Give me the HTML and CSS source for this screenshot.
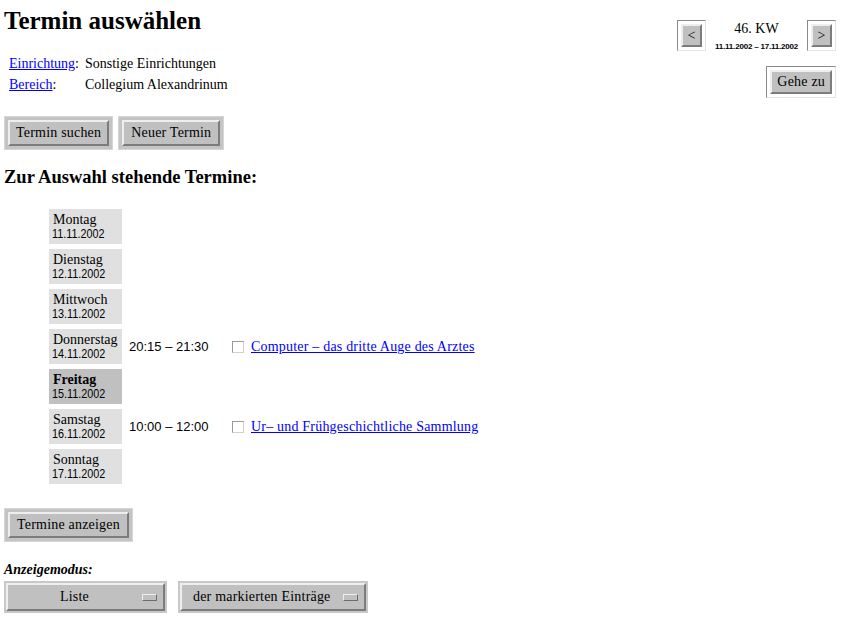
FILE: index.html
```html
<!DOCTYPE html>
<html lang="de">
<head>
    <meta charset="UTF-8">
    <title>Termin auswählen</title>
    <link rel="stylesheet" href="styles.css">
</head>
<body>

<div class="page">
    <div class="top">
        <div class="intro">
            <h1>Termin auswählen</h1>
            <div class="info">
                <span><a href="#">Einrichtung</a>:</span>
                <span>Sonstige Einrichtungen</span>
                <span><a href="#">Bereich</a>:</span>
                <span>Collegium Alexandrinum</span>
            </div>
        </div>

        <div class="week">
            <div class="week-nav">
                <span class="sunken"><button class="bevel arrow">&lt;</button></span>
                <div class="week-label">
                    <div class="kw">46. KW</div>
                    <div class="range">11.11.2002 – 17.11.2002</div>
                </div>
                <span class="sunken"><button class="bevel arrow">&gt;</button></span>
            </div>
            <span class="sunken goto"><button class="bevel">Gehe zu</button></span>
        </div>
    </div>

    <div class="actions">
        <span class="frame"><button class="bevel wide">Termin suchen</button></span>
        <span class="frame"><button class="bevel wide">Neuer Termin</button></span>
    </div>

    <h2>Zur Auswahl stehende Termine:</h2>

    <div class="schedule">
        <div class="day"><span class="name">Montag</span><span class="date">11.11.2002</span></div>
        <div></div><div></div><div></div>

        <div class="day"><span class="name">Dienstag</span><span class="date">12.11.2002</span></div>
        <div></div><div></div><div></div>

        <div class="day"><span class="name">Mittwoch</span><span class="date">13.11.2002</span></div>
        <div></div><div></div><div></div>

        <div class="day"><span class="name">Donnerstag</span><span class="date">14.11.2002</span></div>
        <div class="time">20:15 – 21:30</div>
        <div class="check"><span class="box"></span></div>
        <div class="event"><a href="#">Computer – das dritte Auge des Arztes</a></div>

        <div class="day today"><span class="name">Freitag</span><span class="date">15.11.2002</span></div>
        <div></div><div></div><div></div>

        <div class="day"><span class="name">Samstag</span><span class="date">16.11.2002</span></div>
        <div class="time">10:00 – 12:00</div>
        <div class="check"><span class="box"></span></div>
        <div class="event"><a href="#">Ur– und Frühgeschichtliche Sammlung</a></div>

        <div class="day"><span class="name">Sonntag</span><span class="date">17.11.2002</span></div>
        <div></div><div></div><div></div>
    </div>

    <div class="show">
        <span class="frame"><button class="bevel wide">Termine anzeigen</button></span>
    </div>

    <div class="mode-label">Anzeigemodus:</div>
    <div class="modes">
        <span class="option list"><span class="option-face">Liste<i class="marker"></i></span></span>
        <span class="option scope"><span class="option-face">der markierten Einträge<i class="marker"></i></span></span>
    </div>
</div>

</body>
</html>
```

FILE: styles.css
```css
html, body {
    margin: 0;
    background-color: white;
}
body {
    font-family: "Liberation Serif", "Times New Roman", serif;
    font-size: 14px;
    color: black;
}
a {
    color: #0000ff;
}
.page {
    width: 832px;
    padding: 0 9px 0 4px;
}

/* header */
.top {
    display: flex;
    justify-content: space-between;
}
h1 {
    margin: 7px 0 0;
    font-size: 25px;
    line-height: 28px;
}
.info {
    display: grid;
    grid-template-columns: 76px auto;
    margin-top: 18px;
    padding-left: 5px;
    line-height: 21px;
}
.week {
    display: flex;
    flex-direction: column;
    align-items: flex-end;
    padding-top: 20px;
    width: 159px;
}
.week-nav {
    display: flex;
    align-items: flex-start;
}
.week-label {
    width: 101px;
    text-align: center;
}
.kw {
    font-size: 14px;
    line-height: 15px;
    padding-top: 1px;
}
.range {
    font-family: "Liberation Sans", Arial, sans-serif;
    font-size: 8px;
    font-weight: bold;
    line-height: 9px;
    margin-top: 6px;
    letter-spacing: -0.2px;
}
.goto {
    margin-top: 15px;
}
.goto .bevel {
    padding: 0 5px;
}

/* bevelled buttons */
.bevel {
    font-family: "Liberation Serif", "Times New Roman", serif;
    font-size: 14px;
    color: black;
    background-color: #c0c0c0;
    border: 2px solid;
    border-color: #eeeeee #7c7c7c #7c7c7c #eeeeee;
    margin: 0;
    padding: 0 7px;
    height: 24px;
    line-height: 18px;
    letter-spacing: 0.2px;
    display: block;
}
.sunken {
    display: inline-block;
    border: 1px solid;
    border-color: #8a8a8a #e4e4e4 #e4e4e4 #8a8a8a;
    padding: 3px;
    background-color: white;
}
.arrow {
    width: 21px;
    height: 23px;
    padding: 0;
}
.frame {
    display: inline-block;
    padding: 3px;
    background-color: #c4c4c4;
    border: 1px solid #d6d6d6;
}
.wide {
    height: 26px;
    padding: 0 7px;
}
.actions {
    display: flex;
    gap: 5px;
    margin-top: 18px;
}
.actions .frame:first-child .bevel {
    padding: 0 6px;
}

h2 {
    font-size: 18.5px;
    line-height: 21px;
    margin: 17px 0 0;
}

/* schedule grid */
.schedule {
    display: grid;
    grid-template-columns: 73px 110px 19px auto;
    grid-auto-rows: 35px;
    row-gap: 5px;
    margin: 21px 0 0 45px;
}
.day {
    background-color: #e0e0e0;
    display: flex;
    flex-direction: column;
    align-items: flex-start;
    padding: 3px 0 0 3px;
}
.day .name {
    padding-left: 1px;
    line-height: 15px;
}
.day .date {
    font-family: "Liberation Sans", Arial, sans-serif;
    font-size: 13px;
    line-height: 14px;
    transform: scaleX(0.83);
    transform-origin: left center;
}
.today {
    background-color: #c0c0c0;
}
.today .name {
    font-weight: bold;
}
.time {
    font-family: "Liberation Sans", Arial, sans-serif;
    font-size: 13px;
    padding-left: 7px;
    align-self: center;
}
.check {
    align-self: center;
}
.box {
    display: block;
    width: 10px;
    height: 10px;
    border: 1px solid;
    border-color: #9a9a9a #cfcfcf #cfcfcf #9a9a9a;
    background-color: white;
}
.event {
    align-self: center;
    letter-spacing: 0.2px;
}

.show {
    margin-top: 24px;
}
.mode-label {
    font-weight: bold;
    font-style: italic;
    line-height: 17px;
    margin-top: 19px;
}

/* option menus */
.modes {
    display: flex;
    gap: 11px;
    margin-top: 3px;
}
.option {
    display: inline-block;
    border: 2px solid #c8c8c8;
}
.option-face {
    display: flex;
    align-items: center;
    position: relative;
    height: 24px;
    box-sizing: content-box;
    background-color: #c0c0c0;
    border: 2px solid;
    border-color: #eeeeee #7c7c7c #7c7c7c #eeeeee;
    letter-spacing: 0.2px;
}
.list .option-face {
    width: 103px;
    padding-left: 52px;
}
.scope .option-face {
    width: 171px;
    padding-left: 11px;
}
.marker {
    position: absolute;
    right: 6px;
    top: 9px;
    width: 13px;
    height: 5px;
    background-color: #c0c0c0;
    border: 1px solid;
    border-color: #eeeeee #6c6c6c #6c6c6c #eeeeee;
}
```
